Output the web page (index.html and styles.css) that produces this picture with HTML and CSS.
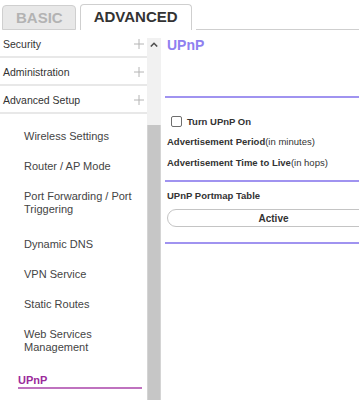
FILE: index.html
```html
<!DOCTYPE html>
<html lang="en">
<head>
    <meta charset="UTF-8">
    <meta name="viewport" content="width=device-width, initial-scale=1.0">
    <title>UPnP</title>
    <link rel="stylesheet" href="styles.css">
</head>
<body>
    <div class="tabs">
        <div class="tab">BASIC</div>
        <div class="tab active">ADVANCED</div>
        <div class="tab-fill"></div>
    </div>

    <div class="main">
        <div class="sidebar">
            <div class="menu-row">
                <span>Security</span>
                <svg class="plus" width="10" height="10" viewBox="0 0 10 10"><path d="M5 0V10M0 5H10" stroke="#b4b4b4" stroke-width="1"/></svg>
            </div>
            <div class="menu-row">
                <span>Administration</span>
                <svg class="plus" width="10" height="10" viewBox="0 0 10 10"><path d="M5 0V10M0 5H10" stroke="#b4b4b4" stroke-width="1"/></svg>
            </div>
            <div class="menu-row">
                <span>Advanced Setup</span>
                <svg class="plus" width="10" height="10" viewBox="0 0 10 10"><path d="M5 0V10M0 5H10" stroke="#b4b4b4" stroke-width="1"/></svg>
            </div>

            <div class="submenu">
                <div class="sub-item">Wireless Settings</div>
                <div class="sub-item">Router / AP Mode</div>
                <div class="sub-item two">Port Forwarding / Port<br>Triggering</div>
                <div class="sub-item">Dynamic DNS</div>
                <div class="sub-item">VPN Service</div>
                <div class="sub-item">Static Routes</div>
                <div class="sub-item two last">Web Services<br>Management</div>
                <div class="sub-item current">UPnP</div>
            </div>
        </div>

        <div class="scrollbar">
            <div class="scroll-up">
                <svg width="8" height="5" viewBox="0 0 8 5"><path d="M0.8 4.5L4 1.3L7.2 4.5" fill="none" stroke="#505050" stroke-width="1.6"/></svg>
            </div>
            <div class="scroll-track"></div>
            <div class="scroll-thumb"></div>
        </div>

        <div class="content">
            <div class="page-head">
                <h1>UPnP</h1>
            </div>

            <div class="section">
                <label class="row">
                    <input type="checkbox" class="check">
                    <span class="label">Turn UPnP On</span>
                </label>
                <div class="row"><span class="label">Advertisement Period</span><span class="unit">(in minutes)</span></div>
                <div class="row tall"><span class="label">Advertisement Time to Live</span><span class="unit">(in hops)</span></div>
            </div>

            <div class="section table-section">
                <div class="row"><span class="label">UPnP Portmap Table</span></div>
                <button class="pill-btn">Active</button>
            </div>
        </div>
    </div>
</body>
</html>
```

FILE: styles.css
```css
* {
    margin: 0;
    padding: 0;
    box-sizing: border-box;
}

body {
    font-family: "Liberation Sans", Arial, sans-serif;
    background: #fff;
    color: #333;
    overflow: hidden;
}

.tabs {
    display: flex;
    align-items: flex-end;
    height: 30px;
    padding-left: 2px;
    gap: 4px;
}

.tab {
    height: 25px;
    line-height: 24px;
    padding: 0 12px 0 13px;
    font-size: 15px;
    font-weight: bold;
    color: #b3b3b3;
    background: #e8e8e8;
    border: 1px solid #cfcfcf;
    border-radius: 4px 4px 0 0;
}

.tab.active {
    height: 26px;
    padding: 0 13px;
    color: #333;
    background: #fff;
    border-bottom: none;
}

.tab-fill {
    flex: 1;
    border-bottom: 1px solid #cfcfcf;
}

.main {
    display: flex;
    height: calc(100vh - 30px);
    overflow: hidden;
}

.sidebar {
    flex: 0 0 147px;
}

.menu-row {
    display: flex;
    align-items: center;
    justify-content: space-between;
    height: 28px;
    padding: 1px 3px 0 3px;
    font-size: 10.5px;
    color: #333;
    border-bottom: 2px solid #e8e8e8;
}

.submenu {
    padding-top: 8px;
}

.sub-item {
    padding: 8px 0 9px 24px;
    font-size: 11px;
    line-height: 13px;
    color: #444;
}

.sub-item.two {
    padding-bottom: 14px;
}

.sub-item.two.last {
    padding-bottom: 12px;
}

.sub-item.current {
    margin-left: 18px;
    width: 124px;
    padding: 8px 0 0 0;
    font-weight: bold;
    color: #9b2b9b;
    border-bottom: 2px solid #bf72bf;
}

.scrollbar {
    flex: 0 0 14px;
    display: flex;
    flex-direction: column;
    margin-top: 8px;
    background: #f1f1f1;
}

.scroll-up {
    height: 13px;
    display: flex;
    justify-content: center;
    align-items: center;
}

.scroll-track {
    height: 74px;
}

.scroll-thumb {
    flex: 1;
    background: #c6c6c6;
    border-left: 1px solid #d4d4d4;
    border-right: 1px solid #d4d4d4;
}

.content {
    flex: 0 0 222px;
    margin-left: 4px;
}

.page-head {
    height: 68px;
    padding: 7px 2px 0;
    border-bottom: 2px solid #a093f0;
}

.page-head h1 {
    font-size: 14px;
    line-height: 16px;
    color: #8f80f0;
}

.section {
    padding: 13px 2px 8px;
    border-bottom: 2px solid #a093f0;
}

.row {
    display: flex;
    align-items: center;
    height: 20px;
    font-size: 9.5px;
    color: #333;
}

.row.tall {
    height: 21px;
    padding-top: 1px;
}

.label {
    font-weight: bold;
}

.unit {
    font-weight: normal;
}

.check {
    appearance: none;
    width: 11px;
    height: 11px;
    margin: 0 5px 0 4px;
    border: 1.5px solid #6e6e6e;
    border-radius: 2px;
    background: #fff;
}

.table-section {
    padding: 3px 0 15px 2px;
}

.pill-btn {
    display: block;
    width: 213px;
    height: 18px;
    margin-top: 4px;
    font-family: inherit;
    font-size: 10px;
    font-weight: bold;
    color: #333;
    background: #fff;
    border: 1px solid #c4c4c4;
    border-radius: 9px;
}
```
